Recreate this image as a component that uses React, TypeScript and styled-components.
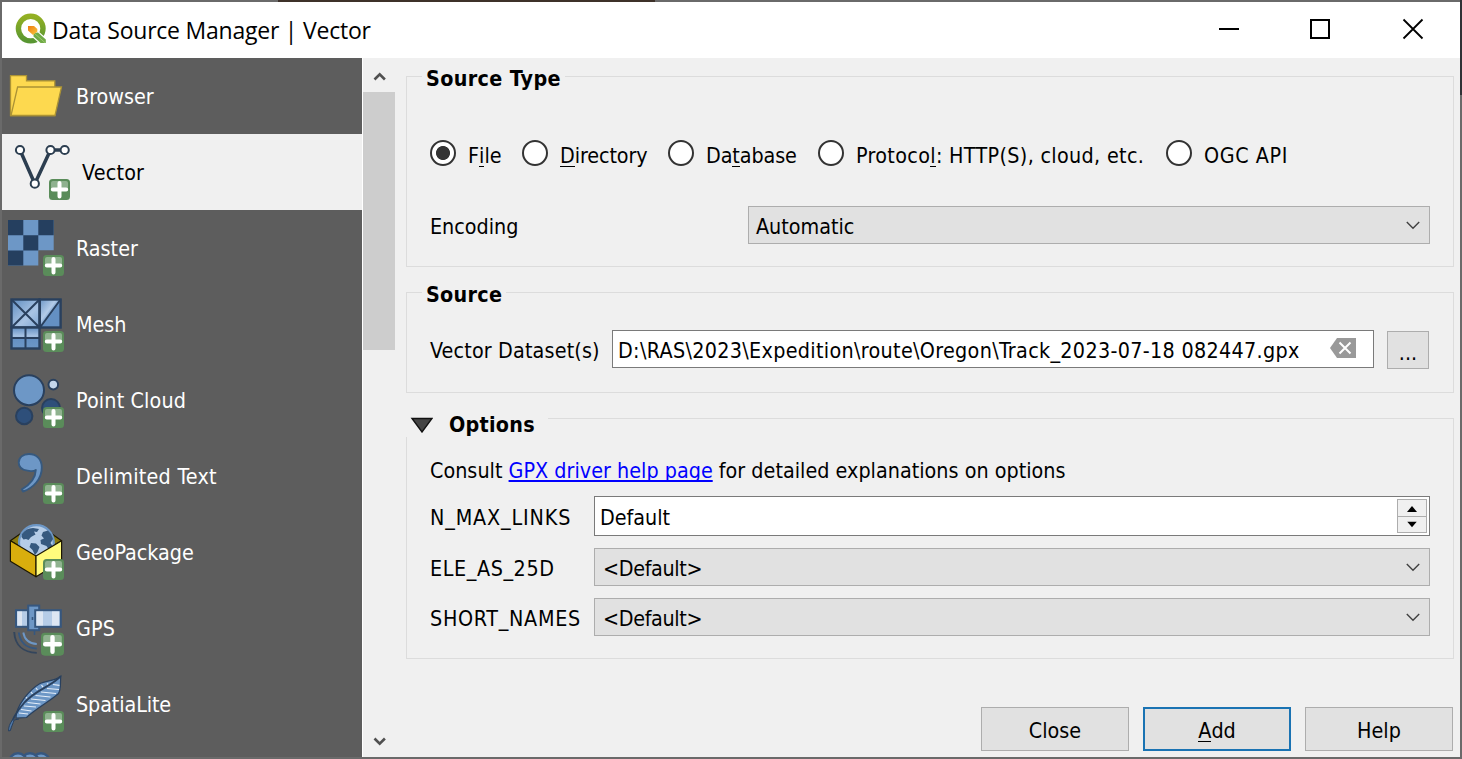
import React from "react";
import styled, { createGlobalStyle, css } from "styled-components";

const Global = createGlobalStyle`
  * { box-sizing: border-box; }
  body { margin: 0; overflow: hidden; }
`;

const Desktop = styled.div`
  width: 1462px;
  height: 759px;
  padding: 2px;
  overflow: hidden;
  background:
    linear-gradient(#2f3236, #2f3236) 1460px 0 / 2px 95px no-repeat,
    linear-gradient(#3d3129, #3d3129) 278px 0 / 377px 2px no-repeat,
    #6a6a6a;
  font-family: "DejaVu Sans Condensed", "DejaVu Sans", sans-serif;
  font-stretch: condensed;
  font-size: 21.33px;
  line-height: 26px;
  color: #000;
`;

const Window = styled.main`
  width: 1458px;
  height: 755px;
  display: flex;
  flex-direction: column;
  background: #f0f0f0;
`;

const TitleBar = styled.header`
  height: 56px;
  flex: none;
  display: flex;
  align-items: center;
  background: #fff;
`;

const LogoSvg = styled.svg`
  width: 48px;
  height: 56px;
  flex: none;
`;

const WindowTitle = styled.h1`
  flex: 1;
  margin: 0 0 0 2px;
  font: 400 23px/32px "Open Sans", "Noto Sans", sans-serif;
  letter-spacing: -0.23px;
  white-space: nowrap;
`;

const WindowControls = styled.svg`
  width: 276px;
  height: 56px;
`;

const Body = styled.div`
  flex: 1;
  min-height: 0;
  display: flex;
`;

const Sidebar = styled.nav`
  width: 360px;
  height: 699px;
  overflow: hidden;
  background: #5d5d5d;
`;

const SourceItem = styled.div<{ $active?: boolean }>`
  height: 76px;
  display: flex;
  align-items: center;
  gap: ${(p) => (p.$active ? 10 : 4)}px;
  background: ${(p) => (p.$active ? "#f0f0f0" : "transparent")};
  color: ${(p) => (p.$active ? "#000" : "#fff")};

  > span {
    padding-top: 2px;
  }
`;

const IconSvg = styled.svg`
  width: 70px;
  height: 76px;
  flex: none;
`;

const Text = styled.span<{ $spacing?: number }>`
  letter-spacing: ${(p) => p.$spacing ?? 0}px;
  white-space: nowrap;
`;

const ScrollBar = styled.div`
  width: 34px;
  height: 699px;
  padding-left: 1px;
  border-left: 1px solid #fff;
  display: flex;
  flex-direction: column;
  justify-content: space-between;
  background: #f0f0f0;
`;

const ScrollArrow = styled.svg`
  width: 32px;
  height: 34px;
`;

const ScrollThumb = styled.div`
  width: 32px;
  height: 258px;
  margin-left: -1px;
  margin-bottom: auto;
  background: #cdcdcd;
`;

const Content = styled.section`
  flex: 1;
  padding: 18px 6px 0 10px;
  display: flex;
  flex-direction: column;
`;

const Group = styled.section<{ $height: number; $gap: number }>`
  height: ${(p) => p.$height}px;
  flex: none;
  margin-bottom: ${(p) => p.$gap}px;
  padding: 0 23px;
  border: 1px solid #dcdcdc;
  display: flex;
  flex-direction: column;
`;

const GroupTitle = styled.h2<{ $collapsible?: boolean; $spacing?: number }>`
  align-self: flex-start;
  height: 26px;
  margin: -11px 0 0 -8px;
  padding: 0 4px;
  font-size: 21.33px;
  line-height: 26px;
  font-weight: 700;
  letter-spacing: ${(p) => p.$spacing ?? 0}px;
  white-space: nowrap;
  background: #f0f0f0;
  ${(p) =>
    p.$collapsible &&
    css`
      display: flex;
      align-items: center;
      gap: 16px;
      height: 30px;
      margin: -12px 0 0 -24px;
      padding: 5px 13px 0 4px;
    `}
`;

const Triangle = styled.svg`
  width: 23px;
  height: 16px;
`;

const Row = styled.div<{ $top: number; $height: number }>`
  height: ${(p) => p.$height}px;
  margin-top: ${(p) => p.$top}px;
  display: flex;
  align-items: center;
`;

const RadioOption = styled.label<{ $width: number }>`
  width: ${(p) => p.$width}px;
  display: flex;
  align-items: center;
  gap: 12px;
  white-space: nowrap;

  > span {
    padding-top: 6px;
  }
`;

const RadioCircle = styled.i<{ $checked?: boolean }>`
  width: 26px;
  height: 26px;
  flex: none;
  border: 2px solid #333;
  border-radius: 50%;
  background: ${(p) =>
    p.$checked ? "radial-gradient(circle, #333 6.6px, #fff 7.4px)" : "#fff"};
`;

const Key = styled.span`
  border-bottom: 1px solid #000;
  display: inline-block;
  line-height: 21px;
`;

const FieldLabel = styled.span<{ $width: number; $spacing?: number }>`
  width: ${(p) => p.$width}px;
  flex: none;
  padding-top: 4px;
  letter-spacing: ${(p) => p.$spacing ?? 0}px;
  white-space: nowrap;
`;

const Field = styled.div<{ $white?: boolean; $indent: number; $end?: number }>`
  flex: 1;
  height: 100%;
  padding-left: ${(p) => p.$indent}px;
  padding-right: ${(p) => p.$end ?? 8}px;
  border: 1px solid ${(p) => (p.$white ? "#7a7a7a" : "#adadad")};
  background: ${(p) => (p.$white ? "#fff" : "#e1e1e1")};
  display: flex;
  align-items: center;
  justify-content: space-between;

  > span {
    padding-top: ${(p) => (p.$white ? 4 : 3)}px;
  }
`;

const SmallSvg = styled.svg`
  flex: none;
`;

const BrowseButton = styled.div`
  width: 42px;
  height: 38px;
  margin: 1px 1px 0 13px;
  border: 1px solid #adadad;
  background: #e1e1e1;
  text-align: center;
  line-height: 41px;
`;

const Spinner = styled.div`
  width: 30px;
  height: 34px;
  border: 1px solid #adadad;
  background: #f0f0f0;
  display: flex;
  flex-direction: column;

  > svg + svg {
    border-top: 1px solid #adadad;
  }
`;

const HelpLink = styled.a`
  color: #0000ff;
  text-decoration: underline;
  text-decoration-thickness: 2px;
  text-underline-offset: 2px;
  text-decoration-skip-ink: none;
`;

const Footer = styled.footer`
  margin-right: 1px;
  display: flex;
  justify-content: flex-end;
  gap: 14px;
`;

const DialogButton = styled.div<{ $primary?: boolean }>`
  width: 148px;
  height: 44px;
  display: flex;
  align-items: center;
  justify-content: center;
  padding-top: 4px;
  background: #e1e1e1;
  border: ${(p) => (p.$primary ? "2px solid #1a73b3" : "1px solid #adadad")};
`;

const Plus = ({ x = 43, y = 45, s = 21 }: { x?: number; y?: number; s?: number }) => (
  <g transform={`translate(${x} ${y}) scale(${s / 21})`}>
    <rect width="21" height="21" rx="3.5" fill="#5a8c5a" />
    <path d="M2 10V4Q2 2 4 2H17Q19 2 19 4V10Z" fill="#8fb28f" />
    <path d="M10.5 4V17.5M3.8 10.6H17.2" stroke="#fff" strokeWidth="4" strokeLinecap="round" />
  </g>
);

const navy = "#29405e";
const steel = "#6d97c6";

const icons: Record<string, React.ReactNode> = {
  Browser: (
    <g fill="#fdd94f" stroke="#ab9235" strokeWidth="1.3">
      <path d="M10.5 57.5V17.7H26.5V22.8H54.8V57.5Z" />
      <path d="M17.6 29H61.5L55 57.5H11Z" />
    </g>
  ),
  Vector: (
    <>
      <path d="M20 16L34.8 49.7L50.5 16H64.7" fill="none" stroke="#2c3e50" strokeWidth="3.5" />
      <g fill="#fff" stroke="#2c3e50" strokeWidth="2">
        <circle cx="20" cy="16" r="4.1" />
        <circle cx="50.5" cy="16" r="4.1" />
        <circle cx="64.7" cy="16" r="4.1" />
        <circle cx="34.8" cy="49.7" r="4.1" />
      </g>
      <Plus x={49} />
    </>
  ),
  Raster: (
    <>
      <path d="M8 10H53.7V40.3H38.3V55.5H8Z" fill={steel} />
      <path
        d="M8 10h15.3v15.2H8zM38.3 10h15.4v15.2H38.3zM23.3 25.2h15v15.2h-15zM8 40.4h15.3v15.1H8z"
        fill="#253f5f"
      />
      <Plus />
    </>
  ),
  Mesh: (
    <>
      <defs>
        <linearGradient id="meshA" x1="0" y1="0" x2="1" y2="1">
          <stop offset="0" stopColor="#5f8dc0" />
          <stop offset=".6" stopColor="#a9c4e4" />
          <stop offset="1" stopColor="#7ea5d2" />
        </linearGradient>
        <linearGradient id="meshB" x1="0" y1="0" x2="1" y2="1">
          <stop offset="0" stopColor="#6d97c6" />
          <stop offset=".4" stopColor="#b4cce8" />
          <stop offset=".55" stopColor="#6490c3" />
          <stop offset="1" stopColor="#6490c3" />
        </linearGradient>
        <linearGradient id="meshC" x1="0" y1="0" x2="0" y2="1">
          <stop offset="0" stopColor="#6490c3" />
          <stop offset=".42" stopColor="#a9c4e4" />
          <stop offset=".5" stopColor="#6490c3" />
          <stop offset="1" stopColor="#6d97c6" />
        </linearGradient>
      </defs>
      <g stroke={navy} strokeWidth="2.4">
        <rect x="11.5" y="13.5" width="28" height="28" fill="url(#meshA)" />
        <rect x="39.8" y="13.5" width="20.8" height="28" fill="url(#meshB)" />
        <rect x="11.5" y="41.5" width="28" height="21" fill="url(#meshC)" />
        <path
          d="M11.5 13.5L39.5 41.5M39.5 13.5L11.5 41.5M60.5 13.5L40 41.5M25.5 41.5V62.5M11.5 52H39.5"
          strokeWidth="2"
        />
      </g>
      <Plus />
    </>
  ),
  "Point Cloud": (
    <>
      <g stroke={navy} strokeWidth="2">
        <circle cx="29" cy="28.2" r="15" fill={steel} />
        <circle cx="53.3" cy="22.6" r="4.8" fill="#c3d6ec" />
        <circle cx="51" cy="46" r="9" fill="#2e4f7a" />
        <circle cx="24.2" cy="54" r="8.2" fill="#2e4f7a" />
      </g>
      <Plus />
    </>
  ),
  "Delimited Text": (
    <>
      <path
        d="M29 16C36.5 16 41.8 21 41.8 29.5C41.8 41 33.5 50 23 53.5L21.8 51.4C28.5 47.5 35.5 40.5 35.8 32C33 34 30.5 33 27.5 32.6C22 32 18.7 29 18.7 24.5C18.7 19.5 23 16 29 16Z"
        fill={steel}
        stroke="#36597f"
        strokeWidth="1.9"
        strokeLinejoin="round"
      />
      <Plus />
    </>
  ),
  GeoPackage: (
    <>
      <g stroke="#1d1700" strokeWidth="1.2" strokeLinejoin="round">
        <path d="M10.4 26.7L20 20H52L61.6 26.7L36 42Z" fill="#8a7a10" />
      </g>
      <circle cx="36.4" cy="28.5" r="17.4" fill="#b5cce7" stroke="#6d97c6" strokeWidth="2.2" />
      <path
        d="M22 20Q26 14 33 14L39 15L37 18L34 17.5L35.5 20.5L31 23L28.5 26L26 25L23.5 25.5L21.5 23ZM43 18L48 16.5L51 20L53 25L50.5 29L52.5 32L49 36L46.5 32L41 30L40.5 26L44 24.5L41.5 21.5ZM31 29L36 29.5L39.5 33L37.5 38L35 41L32.5 36L29.5 33Z"
        fill="#36597f"
      />
      <g stroke="#1d1700" strokeWidth="1.2" strokeLinejoin="round">
        <path d="M10.4 26.7L36 42V62.7L10.4 47.2Z" fill="#d9ae0d" />
        <path d="M61.6 26.7L36 42V62.7L61.6 47.2Z" fill="#fffb7d" />
      </g>
      <Plus />
    </>
  ),
  GPS: (
    <>
      <g stroke="#36577f" strokeWidth="2">
        <rect x="16" y="20.2" width="12" height="16.6" fill="#b5cce7" />
        <rect x="28.2" y="15.6" width="11" height="24.6" fill={steel} />
        <rect x="35.2" y="20.2" width="25.6" height="16.6" fill="#b5cce7" />
      </g>
      <path d="M17.5 21.5h4.5v14h-4.5zM36.5 21.5h6.5v14h-6.5zM52 21.5h7v14h-7z" fill="#dde6f2" />
      <path d="M34.5 40.5V45M32.5 27V30" stroke="#36577f" strokeWidth="1.6" />
      <g fill="none" strokeWidth="1.9">
        <path d="M23.3 42.5C24.5 49.5 29 53.5 36.8 54" stroke={steel} />
        <path d="M18.8 42.5C20 52 26 58 36.8 58.6" stroke="#36577f" />
        <path d="M14.2 42C15 55 23 62.5 36.8 62.9" stroke="#33455c" />
      </g>
      <Plus x={41} y={42.7} s={23} />
    </>
  ),
  SpatiaLite: (
    <>
      <path
        d="M60.8 10.2C54 15.5 46 14.5 40 17.5C29 24 16 40 16 52L26.5 51.5C34 44 50 35 58 28C61.5 24 60 18 60.8 10.2Z"
        fill={steel}
        stroke={navy}
        strokeWidth="1.2"
      />
      <path
        d="M19 47L28 48M21 43.5L31.5 45M24 40L36 41M27.5 36.5L40.5 38M31 33L45.5 34.5M35.5 29.5L50.5 31M41 26L56 27.5M47 22.5L59 23.5M53 18.5L59.5 19.3M26 31L27.5 33M31 26L32.5 28M36 22L37.5 24M41.5 19L43 21.2M47 17.5L48.5 18.8"
        stroke="#e4edf8"
        strokeWidth="1.2"
      />
      <path
        d="M60.8 10.2C51 21 36 23 24 37C16 46 11 54 9.8 64.5"
        fill="none"
        stroke={navy}
        strokeWidth="1.9"
      />
      <path d="M12.5 54C9.5 58 8.5 61 8.6 65L10.4 64.5C11 61 13.5 57 14 54L19 53" fill="#4f78a8" stroke={navy} strokeWidth="1" />
      <Plus />
    </>
  ),
  Next: (
    <g fill={steel} stroke="#36577f" strokeWidth="2.4">
      <circle cx="41" cy="20" r="8.8" />
      <circle cx="30" cy="20" r="8.8" />
      <circle cx="18" cy="20" r="8.8" />
    </g>
  ),
};

const SourceIcon = ({ name }: { name: string }) => (
  <IconSvg viewBox="2 0 70 76">{icons[name]}</IconSvg>
);

const sources: { name: string; spacing?: number; active?: boolean }[] = [
  { name: "Browser" },
  { name: "Vector", spacing: 0.2, active: true },
  { name: "Raster" },
  { name: "Mesh" },
  { name: "Point Cloud", spacing: 0.15 },
  { name: "Delimited Text", spacing: 0.25 },
  { name: "GeoPackage" },
  { name: "GPS", spacing: 0.2 },
  { name: "SpatiaLite", spacing: -0.1 },
];

const Logo = () => (
  <LogoSvg viewBox="2 2 48 56">
    <defs>
      <linearGradient id="ring" x1="0" y1="0" x2="0" y2="1">
        <stop offset="0" stopColor="#93b023" />
        <stop offset="1" stopColor="#589632" />
      </linearGradient>
      <linearGradient id="ray" x1="0" y1="0" x2="1" y2="1">
        <stop offset="0" stopColor="#ee7913" />
        <stop offset="1" stopColor="#f9c93d" />
      </linearGradient>
    </defs>
    <circle cx="30.7" cy="28.6" r="12.3" fill="none" stroke="url(#ring)" strokeWidth="5.4" />
    <path d="M32.5 31.5L38 31L46.6 38.6V44H40L32.5 37.2Z" fill="#fff" />
    <path d="M33.5 33L38 32.4L45.8 39.4V43H40.6L33.5 36.6Z" fill="#70aa46" />
    <path d="M34.5 33.5L45 42.6" stroke="#9bcb6d" strokeWidth="1" />
    <path d="M28 26H34L37.3 29V31.8L33 35L28 30.5Z" fill="url(#ray)" />
  </LogoSvg>
);

const Chevron = () => (
  <SmallSvg width="16" height="10" viewBox="0 0 16 10">
    <path d="M1.8 2L8 8.2L14.2 2" fill="none" stroke="#404040" strokeWidth="1.4" />
  </SmallSvg>
);

const Combo = ({ value, indent, spacing }: { value: string; indent: number; spacing?: number }) => (
  <Field $indent={indent}>
    <Text $spacing={spacing}>{value}</Text>
    <Chevron />
  </Field>
);

export default function App() {
  return (
    <Desktop>
      <Global />
      <Window>
        <TitleBar>
          <Logo />
          <WindowTitle>Data Source Manager | Vector</WindowTitle>
          <WindowControls viewBox="1184 2 276 56">
            <g fill="none" stroke="#000" strokeWidth="2">
              <path d="M1219 29H1239" />
              <rect x="1311" y="20" width="18" height="18" />
              <path d="M1403.5 19.5L1422.5 38.5M1422.5 19.5L1403.5 38.5" strokeWidth="1.8" />
            </g>
          </WindowControls>
        </TitleBar>
        <Body>
          <Sidebar>
            {sources.map((s) => (
              <SourceItem key={s.name} $active={s.active}>
                <SourceIcon name={s.name} />
                <Text $spacing={s.spacing}>{s.name}</Text>
              </SourceItem>
            ))}
            <SourceItem>
              <SourceIcon name="Next" />
            </SourceItem>
          </Sidebar>
          <ScrollBar>
            <ScrollArrow viewBox="0 0 32 34">
              <path d="M10.5 21.5L15.7 16.3L20.9 21.5" fill="none" stroke="#505050" strokeWidth="2.6" />
            </ScrollArrow>
            <ScrollThumb />
            <ScrollArrow viewBox="0 0 32 34">
              <path d="M10.5 15.5L15.7 20.7L20.9 15.5" fill="none" stroke="#505050" strokeWidth="2.6" />
            </ScrollArrow>
          </ScrollBar>
          <Content>
            <Group $height={191} $gap={25}>
              <GroupTitle $spacing={0.35}>Source Type</GroupTitle>
              <Row $top={46} $height={30}>
                <RadioOption $width={92}>
                  <RadioCircle $checked />
                  <Text>
                    F<Key>i</Key>le
                  </Text>
                </RadioOption>
                <RadioOption $width={146}>
                  <RadioCircle />
                  <Text $spacing={-0.1}>
                    <Key>D</Key>irectory
                  </Text>
                </RadioOption>
                <RadioOption $width={150}>
                  <RadioCircle />
                  <Text $spacing={-0.1}>
                    Da<Key>t</Key>abase
                  </Text>
                </RadioOption>
                <RadioOption $width={348}>
                  <RadioCircle />
                  <Text $spacing={0.33}>
                    Protoco<Key>l</Key>: HTTP(S), cloud, etc.
                  </Text>
                </RadioOption>
                <RadioOption $width={140}>
                  <RadioCircle />
                  <Text $spacing={0.6}>OGC API</Text>
                </RadioOption>
              </Row>
              <Row $top={38} $height={38}>
                <FieldLabel $width={318}>Encoding</FieldLabel>
                <Combo value="Automatic" indent={7} />
              </Row>
            </Group>
            <Group $height={101} $gap={25}>
              <GroupTitle $spacing={0.3}>Source</GroupTitle>
              <Row $top={22} $height={38}>
                <FieldLabel $width={182} $spacing={0.15}>Vector Dataset(s)</FieldLabel>
                <Field $white $indent={5} $end={17}>
                  <Text $spacing={0.32}>D:\RAS\2023\Expedition\route\Oregon\Track_2023-07-18 082447.gpx</Text>
                  <SmallSvg width="26" height="22" viewBox="0 0 26 22">
                    <path d="M0 10L7 0H26V20H7Z" fill="#999" />
                    <path d="M9.5 4.5L20.5 15.5M20.5 4.5L9.5 15.5" stroke="#fff" strokeWidth="2" />
                  </SmallSvg>
                </Field>
                <BrowseButton>...</BrowseButton>
              </Row>
            </Group>
            <Group $height={241} $gap={48}>
              <GroupTitle $collapsible $spacing={0.25}>
                <Triangle viewBox="0 0 23 16">
                  <path d="M2 1.5H22L12 15Z" fill="#444" stroke="#111" strokeWidth="1.4" />
                </Triangle>
                Options
              </GroupTitle>
              <Row $top={21} $height={26}>
                <Text $spacing={0.02}>
                  Consult <HelpLink>GPX driver help page</HelpLink> for detailed explanations on options
                </Text>
              </Row>
              <Row $top={12} $height={40}>
                <FieldLabel $width={164} $spacing={0.85}>N_MAX_LINKS</FieldLabel>
                <Field $white $indent={5} $end={2}>
                  <Text>Default</Text>
                  <Spinner>
                    <SmallSvg width="28" height="16" viewBox="0 0 28 16">
                      <path d="M9 12L14 6L19 12Z" />
                    </SmallSvg>
                    <SmallSvg width="28" height="16" viewBox="0 0 28 16">
                      <path d="M9 5L14 11L19 5Z" />
                    </SmallSvg>
                  </Spinner>
                </Field>
              </Row>
              <Row $top={12} $height={38}>
                <FieldLabel $width={164} $spacing={0.6}>ELE_AS_25D</FieldLabel>
                <Combo value="<Default>" indent={8} spacing={-0.33} />
              </Row>
              <Row $top={12} $height={38}>
                <FieldLabel $width={164} $spacing={0.7}>SHORT_NAMES</FieldLabel>
                <Combo value="<Default>" indent={8} spacing={-0.33} />
              </Row>
            </Group>
            <Footer>
              <DialogButton>Close</DialogButton>
              <DialogButton $primary>
                <Text>
                  <Key>A</Key>dd
                </Text>
              </DialogButton>
              <DialogButton>Help</DialogButton>
            </Footer>
          </Content>
        </Body>
      </Window>
    </Desktop>
  );
}
